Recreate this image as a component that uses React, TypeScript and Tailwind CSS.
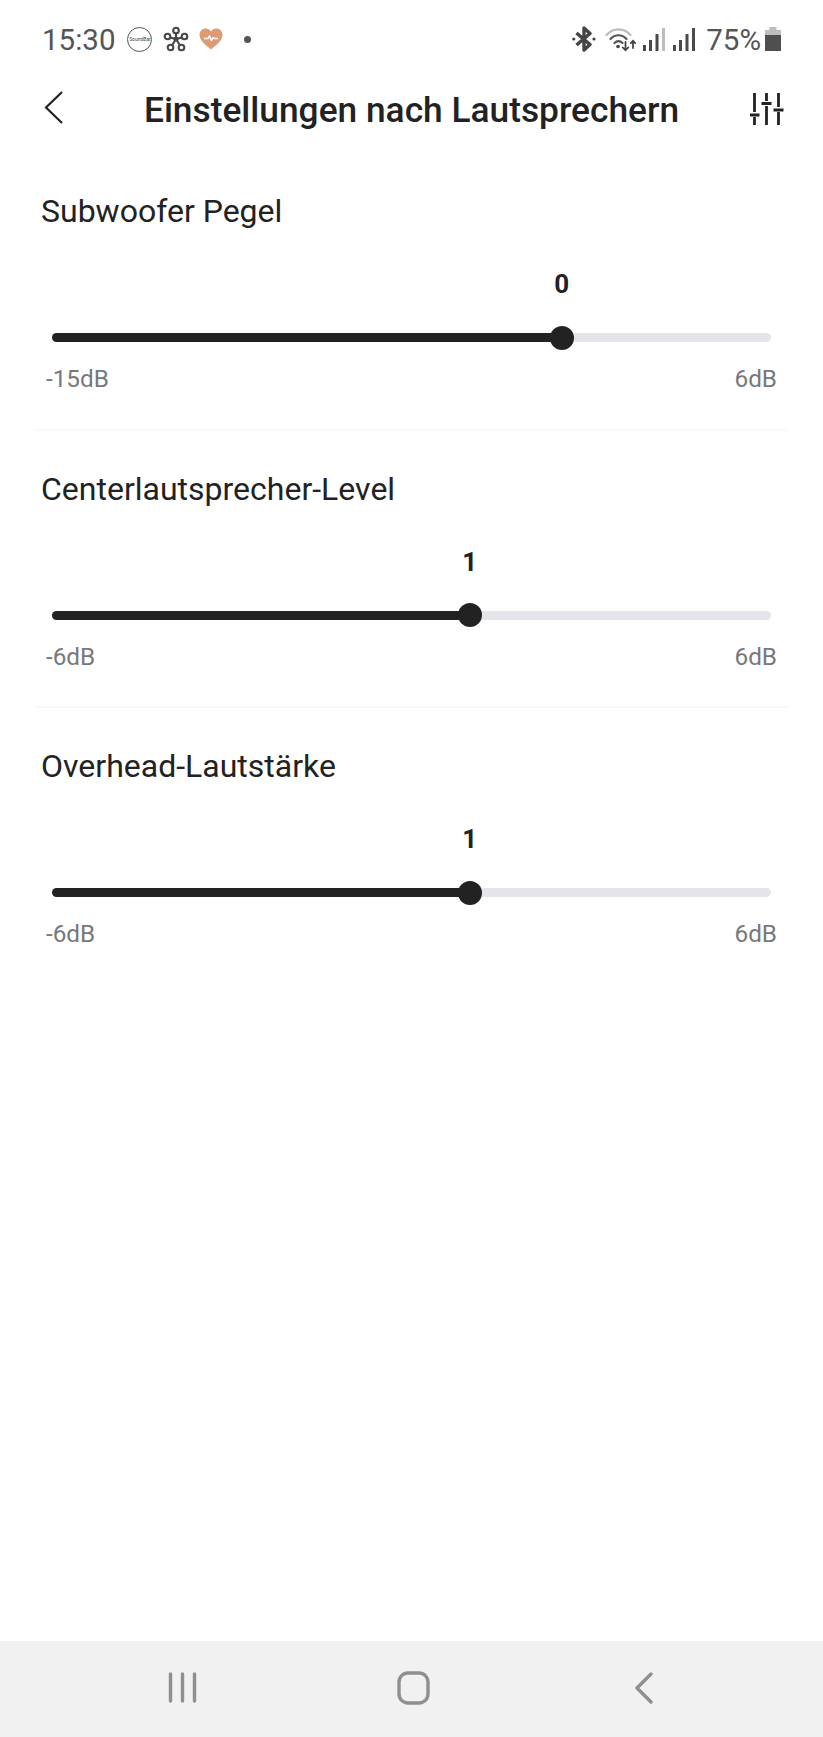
import React from "react";

const sections = [
  { title: "Subwoofer Pegel", value: "0", min: "-15dB", max: "6dB", pct: 70.9 },
  { title: "Centerlautsprecher-Level", value: "1", min: "-6dB", max: "6dB", pct: 58.1 },
  { title: "Overhead-Lautstärke", value: "1", min: "-6dB", max: "6dB", pct: 58.1 },
];

function NetworkIcon() {
  return (
    <svg width="26" height="26" viewBox="0 0 26 26" fill="none" stroke="#484848" strokeWidth="2.1" strokeLinecap="round">
      <path d="M13 13 V5 M13 13 L5 11 M13 13 L21 11 M13 13 L8 21 M13 13 L18 21" />
      <circle cx="13" cy="13" r="2.6" fill="#484848" stroke="none" />
      <circle cx="13" cy="4.5" r="2.8" fill="#fff" />
      <circle cx="4.5" cy="10.5" r="2.8" fill="#fff" />
      <circle cx="21.5" cy="10.5" r="2.8" fill="#fff" />
      <circle cx="7.5" cy="21.5" r="2.8" fill="#fff" />
      <circle cx="18.5" cy="21.5" r="2.8" fill="#fff" />
    </svg>
  );
}

function HeartIcon() {
  return (
    <svg width="24" height="22" viewBox="0 0 24 22">
      <path d="M12 21.5 C8 18 .5 13 .5 6.8 C.5 3 3.4 .5 6.6 .5 C9 .5 11 1.7 12 3.6 C13 1.7 15 .5 17.4 .5 C20.6 .5 23.5 3 23.5 6.8 C23.5 13 16 18 12 21.5 Z" fill="#de9a72" />
      <path d="M5 10.5 H9 L10.5 8 L12.5 12.5 L14 9.5 L15 10.5 H19" fill="none" stroke="#fff" strokeWidth="1.5" strokeLinejoin="round" />
    </svg>
  );
}

function BluetoothIcon() {
  return (
    <svg width="24" height="26" viewBox="0 0 24 26" fill="none" stroke="#444" strokeWidth="3.4">
      <path d="M4.5 7 L18 18.5 L12 24 V2 L18 7.5 L4.5 19" strokeLinejoin="round" />
      <circle cx="1.8" cy="13" r="1.6" fill="#444" stroke="none" />
      <circle cx="22" cy="13" r="1.6" fill="#444" stroke="none" />
    </svg>
  );
}

function WifiIcon() {
  return (
    <svg width="32" height="25" viewBox="0 0 32 25" fill="none" strokeLinecap="round">
      <path d="M1.5 8 C8 .5 19 .5 25.5 8" stroke="#bbb" strokeWidth="2.2" />
      <path d="M5.5 12 C10 7 17 7 21.5 12" stroke="#555" strokeWidth="2.2" />
      <path d="M9.5 16 C12 13.5 15 13.5 17.5 16" stroke="#555" strokeWidth="2.2" />
      <circle cx="13" cy="19.5" r="1.8" fill="#444" />
      <path d="M20.5 15 V23 M17.8 20.5 L20.5 23.3 L23.2 20.5" stroke="#444" strokeWidth="1.8" />
      <path d="M28 21 V14 M25.8 16.2 L28 13.8 L30.2 16.2" stroke="#444" strokeWidth="1.8" />
    </svg>
  );
}

function SignalIcon({ last }: { last: string }) {
  return (
    <svg width="22" height="23" viewBox="0 0 22 23" fill="#4a4a4a">
      <rect x="0" y="17" width="3" height="6" />
      <rect x="6" y="12" width="3" height="11" />
      <rect x="12.5" y="6" width="3" height="17" />
      <rect x="19" y="0" width="3" height="23" fill={last} />
    </svg>
  );
}

function BatteryIcon() {
  return (
    <svg width="16" height="24" viewBox="0 0 16 24">
      <rect x="4.5" y="0" width="7" height="3" fill="#bdbdbd" />
      <rect x="0" y="3" width="16" height="5" fill="#bdbdbd" />
      <rect x="0" y="8" width="16" height="16" fill="#4f4f4f" />
    </svg>
  );
}

function SlidersIcon() {
  return (
    <svg width="34" height="32" viewBox="0 0 34 32" fill="none" stroke="#222" strokeWidth="2.8">
      <path d="M4.5 0 V19 M4.5 24 V32 M0 22 H9.5" />
      <path d="M16.5 0 V8 M16.5 13 V32 M11.5 10.5 H21.5" />
      <path d="M28.5 0 V14 M28.5 19 V32 M23.5 17 H33.5" />
    </svg>
  );
}

function Slider({ pct }: { pct: number }) {
  return (
    <div className="relative h-[9px] rounded-full bg-[#e4e5e9]">
      <div className="h-full rounded-full bg-[#222222]" style={{ width: `${pct}%` }} />
      <div
        className="absolute top-1/2 h-6 w-6 -translate-x-1/2 -translate-y-1/2 rounded-full bg-[#222222]"
        style={{ left: `${pct}%` }}
      />
    </div>
  );
}

export default function App() {
  return (
    <div className="flex h-[1737px] w-[823px] flex-col bg-white font-['Roboto',sans-serif] text-[#222222]">
      <div className="flex h-[78px] items-center justify-between pl-[42px] pr-[42px]">
        <div className="flex items-center">
          <span className="mt-[4px] text-[29.5px] leading-none text-[#555555]">15:30</span>
          <span className="ml-[12px] flex h-[25px] w-[25px] items-center justify-center overflow-hidden rounded-full border border-[#555555] text-[5px] leading-none text-[#444444]">
            SoundBar
          </span>
          <span className="ml-[11px] flex"><NetworkIcon /></span>
          <span className="ml-[10px] flex"><HeartIcon /></span>
          <span className="ml-[21px] h-[7px] w-[7px] rounded-full bg-[#555555]" />
        </div>
        <div className="flex items-center">
          <BluetoothIcon />
          <span className="ml-[9px] flex"><WifiIcon /></span>
          <span className="ml-[6px] flex"><SignalIcon last="#bdbdbd" /></span>
          <span className="ml-[8px] flex"><SignalIcon last="#4a4a4a" /></span>
          <span className="ml-[11px] mt-[4px] text-[29.5px] leading-none text-[#555555]">75%</span>
          <span className="ml-[4px] flex"><BatteryIcon /></span>
        </div>
      </div>

      <div className="flex h-[62px] items-center justify-between pl-[44px] pr-[39px]">
        <svg className="mb-[4px]" width="19" height="33" viewBox="0 0 19 33" fill="none" stroke="#222" strokeWidth="2.2">
          <path d="M18 1 L2 16.5 L18 32" />
        </svg>
        <h1 className="ml-[10px] mt-[4px] text-[35.3px] font-medium leading-none">Einstellungen nach Lautsprechern</h1>
        <SlidersIcon />
      </div>

      <main className="flex-1 px-[36px] pt-[13px]">
        {sections.map((s, i) => (
          <section
            key={s.title}
            className={i < 2 ? "h-[277.5px] border-b-2 border-[#f9f9f9] pt-[38px]" : "h-[277.5px] pt-[38px]"}
          >
            <h2 className="pl-[5px] text-[32px] leading-[40px]">{s.title}</h2>
            <div className="px-[16px]">
              <div className="relative h-[102px]">
                <span
                  className="absolute top-[40px] -translate-x-1/2 text-[26px] font-bold leading-none"
                  style={{ left: `${s.pct}%` }}
                >
                  {s.value}
                </span>
              </div>
              <Slider pct={s.pct} />
            </div>
            <div className="mt-[23px] flex justify-between px-[10px] text-[24.3px] leading-[28px] text-[#77787c]">
              <span>{s.min}</span>
              <span>{s.max}</span>
            </div>
          </section>
        ))}
      </main>

      <nav className="flex h-[96px] items-center bg-[#f1f1f1] pb-[3px] pl-[168px]">
        <svg width="29" height="31" viewBox="0 0 29 31" stroke="#8f8f8f" strokeWidth="3.4" strokeLinecap="round">
          <path d="M2.5 2 V29 M14.5 2 V29 M26.5 2 V29" />
        </svg>
        <svg className="ml-[200px]" width="33" height="34" viewBox="0 0 33 34" fill="none" stroke="#8f8f8f" strokeWidth="3.4">
          <rect x="2" y="2" width="29" height="30" rx="9" />
        </svg>
        <svg className="ml-[205px]" width="18" height="32" viewBox="0 0 18 32" fill="none" stroke="#8f8f8f" strokeWidth="3.4" strokeLinecap="round" strokeLinejoin="round">
          <path d="M16 2 L2 16 L16 30" />
        </svg>
      </nav>
    </div>
  );
}
